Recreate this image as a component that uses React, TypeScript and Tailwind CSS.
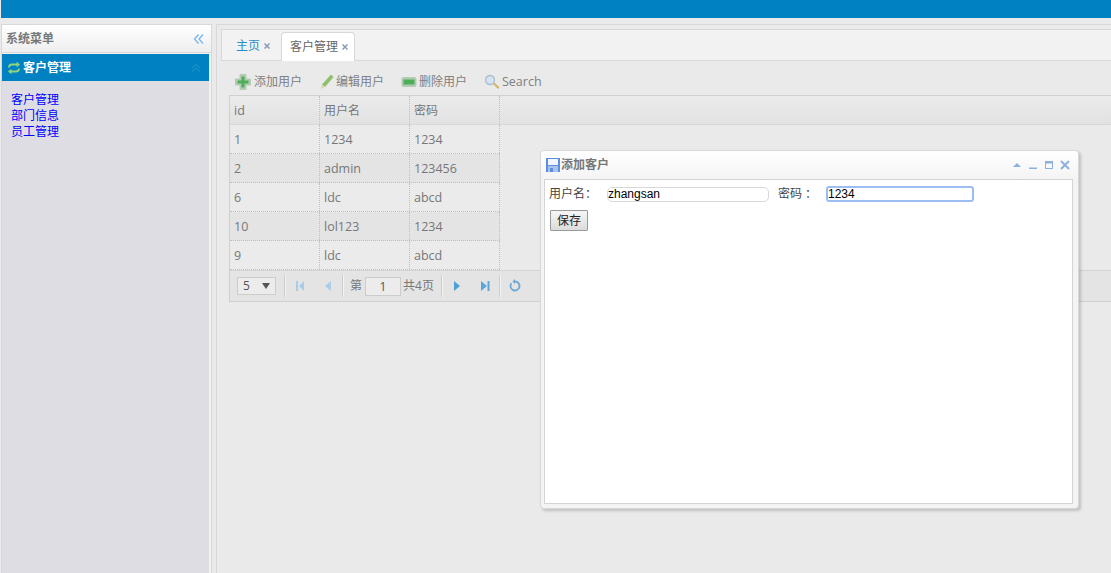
import { useState } from "react";

const rows = [
  { id: "1", name: "1234", pwd: "1234" },
  { id: "2", name: "admin", pwd: "123456" },
  { id: "6", name: "ldc", pwd: "abcd" },
  { id: "10", name: "lol123", pwd: "1234" },
  { id: "9", name: "ldc", pwd: "abcd" },
];

const PagerIcon = ({ d, className = "" }: { d: string; className?: string }) => (
  <svg width="16" height="16" viewBox="0 0 16 16" className={className}>
    <path d={d} fill="currentColor" />
  </svg>
);

const Sep = ({ className = "" }: { className?: string }) => (
  <div className={`w-px h-[22px] bg-[#ccc] border-r border-[#f4f4f4] box-content ${className}`} />
);

const CloseX = () => (
  <svg width="6" height="6" viewBox="0 0 6 6" stroke="#8a9bb8" strokeWidth="1.500">
    <path d="M0.500 0.500L5.500 5.500M5.500 0.500L0.500 5.500" />
  </svg>
);

const Toolbar = () => (
  <div className="h-[34px] flex items-center pt-[8px] pl-[6px] text-[12px] text-[#808080]">
    <div className="flex items-center w-[84px]">
      <svg width="16" height="16" viewBox="0 0 16 16" className="mr-[3px]">
        <path d="M5 0.500h6V5h4.500v6H11v4.500H5V11H0.500V5H5z" fill="#b3cbb3" stroke="#b3cbb3" strokeLinejoin="round" />
        <path d="M6.500 2.500h3V6.500h4v3h-4v4h-3v-4h-4v-3h4z" fill="#4eae5a" />
      </svg>
      <span>添加用户</span>
    </div>
    <div className="flex items-center w-[82px]">
      <svg width="16" height="16" viewBox="0 0 16 16" className="mr-[1px]">
        <path d="M12 0.500l2.500 2.500L6 13l-3-2.500z" fill="#8fbf6a" />
        <path d="M1.500 15l1.500-4.500 3 2.500z" fill="#d8d8b0" />
      </svg>
      <span>编辑用户</span>
    </div>
    <div className="flex items-center w-[83px]">
      <svg width="16" height="16" viewBox="0 0 16 16" className="mr-[2px]">
        <rect x="0.500" y="3" width="15" height="10" rx="2" fill="#b3cbb3" />
        <rect x="2.500" y="5.500" width="11" height="5" fill="#4eae5a" />
      </svg>
      <span>删除用户</span>
    </div>
    <div className="flex items-center">
      <svg width="16" height="16" viewBox="0 0 16 16" className="mr-[2px]">
        <path d="M9 10l1.500-1.500 5 5L14 15z" fill="#d6b46c" />
        <circle cx="6" cy="6" r="4.500" fill="#d5e4f2" stroke="#a9bccd" strokeWidth="1.300" />
      </svg>
      <span className="text-[12.5px]">Search</span>
    </div>
  </div>
);

const DataGrid = () => (
  <div className="border-y border-l border-[#d0d0d0]">
    <div className="flex h-[29px] border-b border-[#d8d8d8] bg-linear-to-b from-[#ebebeb] to-[#e2e2e2] text-[12px] text-[#777]">
      <div className="w-[90px] pl-[4px] leading-[29px] border-r border-dotted border-[#c0c0c0] text-[12.5px]">id</div>
      <div className="w-[90px] pl-[4px] leading-[29px] border-r border-dotted border-[#c0c0c0]">用户名</div>
      <div className="w-[90px] pl-[4px] leading-[29px] border-r border-dotted border-[#c0c0c0]">密码</div>
    </div>
    {rows.map((r, i) => (
      <div
        key={r.id}
        className={`flex w-[270px] h-[29px] border-b border-dotted border-[#c0c0c0] text-[12.5px] text-[#777] ${
          i % 2 ? "bg-[#e4e4e4]" : "bg-[#ebebeb]"
        }`}
      >
        <div className="w-[90px] pl-[4px] leading-[29px] border-r border-dotted border-[#c0c0c0]">{r.id}</div>
        <div className="w-[90px] pl-[4px] leading-[29px] border-r border-dotted border-[#c0c0c0]">{r.name}</div>
        <div className="w-[90px] pl-[4px] leading-[29px] border-r border-dotted border-[#c0c0c0]">{r.pwd}</div>
      </div>
    ))}
    <div className="h-[31px] flex items-center bg-[#e4e4e4] border-t border-[#d4d4d4] pl-[7px] text-[12px] text-[#777]">
      <div className="w-[39px] h-[18px] border border-[#ccc] bg-[#ececec] flex items-center justify-between px-[5px] text-[#555]">
        <span>5</span>
        <span className="w-0 h-0 border-x-[4px] border-x-transparent border-t-[6px] border-t-[#555]" />
      </div>
      <Sep className="ml-[8px]" />
      <PagerIcon className="text-[#a9cde8] ml-[6px]" d="M4 3h2v10H4zM12 3v10L7 8z" />
      <PagerIcon className="text-[#a9cde8] ml-[12px]" d="M11 3v10L5 8z" />
      <Sep className="ml-[6px]" />
      <span className="ml-[6px]">第</span>
      <div className="ml-[3px] w-[36px] h-[19px] border border-[#ccc] bg-[#ececec] text-center leading-[17px] text-[#555]">1</div>
      <span className="ml-[2px] w-[31px] whitespace-nowrap">共4页</span>
      <Sep className="ml-[7px]" />
      <PagerIcon className="text-[#4f9fd8] ml-[6px]" d="M5 3v10l6-5z" />
      <PagerIcon className="text-[#5aa5da] ml-[12px]" d="M4 3l6 5-6 5zM10.500 3h2v10h-2z" />
      <Sep className="ml-[6px]" />
      <svg width="16" height="16" viewBox="0 0 16 16" className="ml-[6px] text-[#6aa9d8]">
        <path d="M8 3.500a4.500 4.500 0 1 1-3.600 1.800" fill="none" stroke="currentColor" strokeWidth="1.800" />
        <path d="M8 1v5L5.500 3.500z" fill="currentColor" />
      </svg>
    </div>
  </div>
);

const AddDialog = ({ name, pwd, setName, setPwd }: { name: string; pwd: string; setName: (v: string) => void; setPwd: (v: string) => void }) => (
  <div className="absolute left-[540px] top-[150px] w-[539px] h-[359px] flex flex-col rounded-[4px] border border-[#d8d8d8] bg-[#f4f4f4] shadow-[2px_2px_3px_rgba(0,0,0,0.18)] pl-[3px] pr-[5px] pb-[4px]">
    <div className="h-[28px] shrink-0 flex items-center text-[12px] font-bold text-[#777] bg-linear-to-b from-white to-[#f4f4f4] -ml-[3px] -mr-[5px] pl-[4px] rounded-t-[4px]">
      <svg width="16" height="16" viewBox="0 0 16 16">
        <path d="M1 1h14v14H1z" fill="#5b8fe0" />
        <path d="M3 2h10v6H3z" fill="#f2f6fc" />
        <path d="M3 9h10v6H3z" fill="#a9c4ec" />
        <path d="M5 11h3v4H5z" fill="#5b8fe0" />
      </svg>
      <span>添加客户</span>
      <div className="ml-auto flex items-center gap-[6px] pr-[8px] text-[#8fb0de]">
        <svg width="10" height="10" viewBox="0 0 10 10"><path d="M1 7L5 3l4 4z" fill="currentColor" /></svg>
        <svg width="10" height="10" viewBox="0 0 10 10"><path d="M1 7.500h8V9H1z" fill="currentColor" /></svg>
        <svg width="10" height="10" viewBox="0 0 10 10"><path d="M1 1h8v8H1z M2 3.500V8h6V3.500z" fill="currentColor" fillRule="evenodd" /></svg>
        <svg width="10" height="10" viewBox="0 0 10 10"><path d="M1 1L9 9M9 1L1 9" stroke="currentColor" strokeWidth="2" /></svg>
      </div>
    </div>
    <div className="flex-1 bg-white border border-[#d4d4d4] px-[4px] pt-[6px] text-[12px] text-[#444]">
      <div className="flex items-center h-[16px]">
        <span className="w-[58px]">用户名：</span>
        <input
          value={name}
          onChange={(e) => setName(e.target.value)}
          className="w-[162px] h-[15px] border border-[#d8d8d8] rounded-[5px] text-[12px] text-black outline-none font-['Liberation_Sans',sans-serif]"
        />
        <span className="ml-[9px] w-[48px]">密码 ：</span>
        <input
          value={pwd}
          onChange={(e) => setPwd(e.target.value)}
          className="w-[148px] h-[16px] border-2 border-[#9dbdf2] rounded-[3px] text-[12px] text-black outline-none font-['Liberation_Sans',sans-serif]"
        />
      </div>
      <button className="block mt-[8px] ml-px w-[38px] h-[21px] border border-[#999] rounded-[1px] bg-linear-to-b from-[#f6f6f6] to-[#dcdcdc] text-[12px] text-[#222]">
        保存
      </button>
    </div>
  </div>
);

export default function App() {
  const [name, setName] = useState("zhangsan");
  const [pwd, setPwd] = useState("1234");

  return (
    <div className="relative w-[1111px] h-[573px] overflow-hidden flex flex-col bg-[#eaeaea] font-['Open_Sans','Noto_Sans_CJK_SC',sans-serif]">
      <div className="h-[18px] shrink-0 ml-px bg-[#0081c2]" />
      <div className="flex flex-1 min-h-0 pt-[6px] pl-px">
        <aside className="w-[211px] shrink-0 border-t border-x border-[#d8d8d8] flex flex-col bg-[#f2f2f2]">
          <div className="h-[28px] shrink-0 flex items-center justify-between pl-[4px] pr-[6px] bg-linear-to-b from-white to-[#eeeeee] border-b border-[#d8d8d8] text-[12px] font-bold text-[#777]">
            <span>系统菜单</span>
            <svg width="12" height="12" viewBox="0 0 12 12" fill="none" stroke="#6db3f2" strokeWidth="1.200">
              <path d="M5.500 1.500L1.500 6l4 4.500M10 1.500L6 6l4 4.500" />
            </svg>
          </div>
          <div className="h-[27px] shrink-0 mt-px mr-[2px] flex items-center justify-between pl-[5px] pr-[7px] bg-[#0081c2] text-[12px] font-bold text-white">
            <span className="flex items-center gap-[2px]">
              <svg width="14" height="14" viewBox="0 0 14 14" fill="none" stroke="#8fd67a" strokeWidth="1.800">
                <path d="M2 6.500C2 4.500 3.500 3.500 5 3.500h6" />
                <path d="M12 7.500c0 2-1.500 3-3 3H3" />
                <path d="M9.500 1.500l2.500 2-2.500 2M4.500 8.500l-2.500 2 2.500 2" strokeWidth="1.300" />
              </svg>
              客户管理
            </span>
            <svg width="12" height="12" viewBox="0 0 12 12" fill="none" stroke="#2a97cf" strokeWidth="1">
              <path d="M2 6l4-3.500L10 6M2 9.500L6 6l4 3.500" />
            </svg>
          </div>
          <div className="flex-1 mr-[2px] bg-[#dddde3] pt-[11px] pl-[9px] text-[12px] leading-[16px] text-[#0000ff]">
            <a className="block">客户管理</a>
            <a className="block">部门信息</a>
            <a className="block">员工管理</a>
          </div>
        </aside>
        <main className="flex-1 min-w-0 flex flex-col ml-[4px] border-l border-t border-[#d8d8d8] pt-[4px] pl-[4px]">
          <div className="h-[32px] shrink-0 bg-[#f2f2f2] border-l border-t border-b border-[#d8d8d8] flex items-end pl-[5px] text-[12px]">
            <div className="h-[28px] pl-[9px] pr-[11px] flex items-center gap-[4px] text-[#2a8fc8]">
              主页<CloseX />
            </div>
            <div className="h-[29px] -mb-px pl-[8px] pr-[6px] flex items-center gap-[4px] bg-white border-x border-t border-[#d8d8d8] rounded-t-[4px] text-[#666]">
              客户管理<CloseX />
            </div>
          </div>
          <div className="flex-1 pl-[8px]">
            <Toolbar />
            <DataGrid />
          </div>
        </main>
      </div>
      <AddDialog name={name} pwd={pwd} setName={setName} setPwd={setPwd} />
    </div>
  );
}
